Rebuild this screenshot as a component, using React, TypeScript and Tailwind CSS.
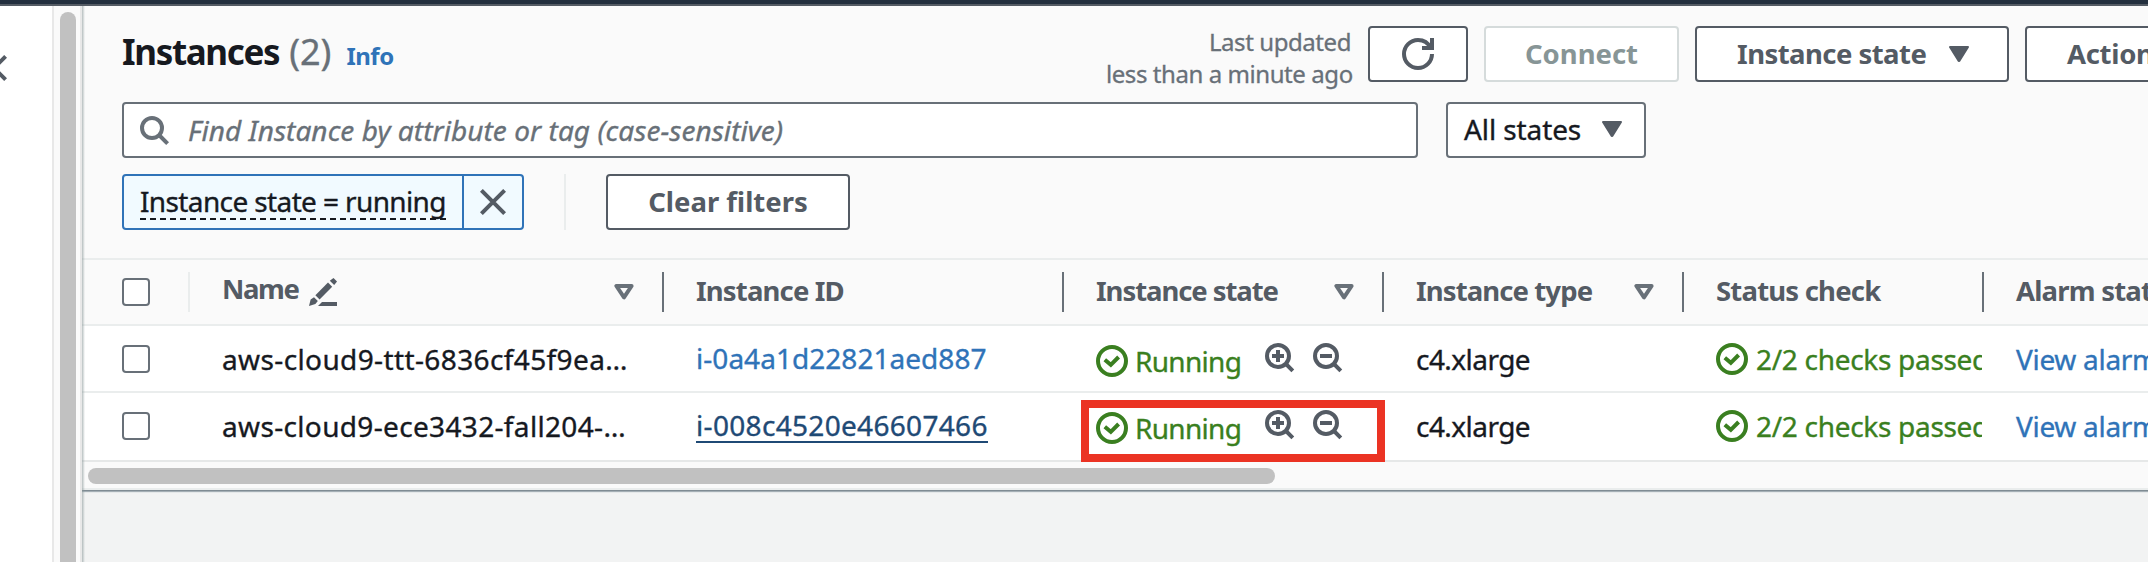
import type { ReactNode } from "react";

type Instance = { name: string; nameClass: string; id: string; idClass: string; selected?: boolean };

const instances: Instance[] = [
  {
    name: "aws-cloud9-ttt-6836cf45f9ea…",
    nameClass: "tracking-[0.38px]",
    id: "i-0a4a1d22821aed887",
    idClass: "text-[#2f73b8] tracking-[0.04px]",
  },
  {
    name: "aws-cloud9-ece3432-fall204-…",
    nameClass: "tracking-[0.34px]",
    id: "i-008c4520e46607466",
    idClass: "text-[#1f4a75] tracking-[0.32px] border-b-2 border-[#1f4a75]",
    selected: true,
  },
];

function CloseIcon() {
  return (
    <svg width="26" height="26" viewBox="0 0 26 26" fill="none" stroke="#545b64" strokeWidth="4" className="shrink-0">
      <path d="M1.4 1.4 24.6 24.6M24.6 1.4 1.4 24.6" />
    </svg>
  );
}

function SearchIcon() {
  return (
    <svg width="32" height="32" viewBox="0 0 32 32" fill="none" stroke="#687078" strokeWidth="4" className="shrink-0">
      <circle cx="14" cy="14" r="10" />
      <path d="M21 21l8.6 8.6" />
    </svg>
  );
}

function ZoomIcon({ plus }: { plus?: boolean }) {
  return (
    <svg width="32" height="32" viewBox="0 0 32 32" fill="none" stroke="#545b64" strokeWidth="4" className="shrink-0">
      <circle cx="14" cy="14" r="11" />
      <path d="M21.5 21.5l7.3 7.3M8 14h12" />
      {plus && <path d="M14 8v12" />}
    </svg>
  );
}

function RefreshIcon() {
  return (
    <svg width="32" height="32" viewBox="0 0 32 32" fill="none" stroke="#545b64" strokeWidth="4">
      <path d="M30 16a14 14 0 1 1-14-14c5.6 0 10.4 3.2 12.6 8" />
      <path d="M20 10h10V0" />
    </svg>
  );
}

function CheckIcon() {
  return (
    <svg width="32" height="32" viewBox="0 0 32 32" fill="none" stroke="#3a7f20" strokeWidth="4" className="shrink-0">
      <circle cx="16" cy="16" r="14" />
      <path d="M8.8 14.8l6 5 7.8-7.8" />
    </svg>
  );
}

function EditIcon() {
  return (
    <svg width="28" height="28" viewBox="0 0 28 28" fill="#545b64" className="shrink-0">
      <path d="M24.5 0 28 3.6 25.2 7 20.8 2.8Z" />
      <path d="M19 4.6 23.2 8.8 10.6 21.4 6.4 17.2Z" />
      <path d="M5 19.2 8.8 23 6.4 26 0 28 1.6 21.6Z" />
      <path d="M13 24h15v4H9Z" />
    </svg>
  );
}

function CaretFilled() {
  return (
    <svg width="20" height="16" viewBox="0 0 20 16" fill="#545b64" stroke="#545b64" strokeWidth="2" strokeLinejoin="round" className="shrink-0">
      <path d="M1 1h18L10.3 15h-.6Z" />
    </svg>
  );
}

function CaretOutline() {
  return (
    <svg width="20" height="16" viewBox="0 0 20 16" fill="none" stroke="#687078" strokeWidth="4" strokeLinejoin="round" className="shrink-0">
      <path d="M2.4 2h15.2L10 13.4Z" />
    </svg>
  );
}

function Button({ className, children }: { className: string; children: ReactNode }) {
  return (
    <button
      className={`flex h-14 shrink-0 items-center rounded-[4px] border-2 bg-white pb-px text-[27.5px] font-bold whitespace-nowrap ${className}`}
    >
      {children}
    </button>
  );
}

function Checkbox() {
  return <span className="block size-7 rounded-[4px] border-2 border-[#687078] bg-white" />;
}

function HeaderCell({ label, className, width, sortable }: { label: string; className: string; width: string; sortable?: boolean }) {
  return (
    <div className={`flex h-10 shrink-0 items-center border-r-2 border-[#687078] pl-8 ${width}`}>
      <span className={`grow pb-0.5 whitespace-nowrap ${className}`}>{label}</span>
      {sortable && (
        <span className="mr-7">
          <CaretOutline />
        </span>
      )}
    </div>
  );
}

function Row({ item }: { item: Instance }) {
  return (
    <div
      className={
        item.selected
          ? "flex h-[69px] shrink-0 items-center border-b-2 border-[#e6e8e8] bg-white pb-0.5 [-webkit-text-stroke:0.35px]"
          : "flex h-[67px] shrink-0 items-center border-b-2 border-[#eaeded] bg-white [-webkit-text-stroke:0.35px]"
      }
    >
      <div className="w-[108px] shrink-0 pl-10">
        <Checkbox />
      </div>
      <div className={`w-[474px] shrink-0 pl-8 whitespace-nowrap ${item.nameClass}`}>{item.name}</div>
      <div className="flex w-[400px] shrink-0 pl-8 whitespace-nowrap">
        <a className={`h-[35px] leading-[34px] ${item.idClass}`}>{item.id}</a>
      </div>
      <div className="relative flex h-[65px] w-80 shrink-0 items-center pl-8">
        {item.selected && <span className="absolute top-[7px] left-[17px] h-[62px] w-[304px] border-8 border-[#eb3323]" />}
        <span className="flex items-center pt-[5px]">
          <CheckIcon />
          <span className="w-32 pl-[7px] tracking-[-0.7px] text-[#3a7f20]">Running</span>
        </span>
        <span className="flex gap-4 pb-px pl-2">
          <ZoomIcon plus />
          <ZoomIcon />
        </span>
      </div>
      <div className="w-[300px] shrink-0 pl-8 tracking-[-0.55px]">c4.xlarge</div>
      <div className="flex w-[298px] shrink-0 items-center overflow-hidden pl-8 whitespace-nowrap text-[#3a7f20]">
        <CheckIcon />
        <span className="pl-2 tracking-[-0.3px]">2/2 checks passed</span>
      </div>
      <div className="shrink-0 pl-[34px] tracking-[-0.3px] whitespace-nowrap text-[#2f73b8]">View alarms</div>
    </div>
  );
}

export default function App() {
  return (
    <div className="flex h-[562px] w-full flex-col overflow-hidden bg-[#f2f3f3] font-['Noto_Sans',sans-serif] text-[28px] leading-9 text-[#16191f]">
      <div className="h-1.5 shrink-0 border-b-2 border-[#545b64] bg-[#232f3e]" />
      <div className="flex min-h-0 grow">
        <div className="flex w-[52px] shrink-0 bg-white pt-[49px]">
          <span className="-ml-[19px]">
            <CloseIcon />
          </span>
        </div>
        <div className="flex w-[30px] shrink-0 border-x-2 border-[#e8e8e8] bg-[#fafafa] pt-1.5 pl-1.5">
          <div className="w-4 rounded-t-full bg-[#c1c1c1]" />
        </div>
        <div className="relative flex min-w-0 grow flex-col overflow-hidden">
          <div className="absolute inset-y-0 left-0 z-10 w-[3px] bg-linear-to-r from-[#879596]/60 to-[#879596]/0" />
          <div className="flex h-[252px] shrink-0 flex-col bg-[#fafafa] pt-5 pl-10">
            <div className="flex h-14 shrink-0">
              <div className="flex w-[984px] shrink-0 items-baseline pt-0.5 whitespace-nowrap">
                <h1 className="text-[35px] leading-[48px] font-bold tracking-[-1.35px]">Instances</h1>
                <span className="pl-2.5 text-[36px] leading-[48px] text-[#687078] [-webkit-text-stroke:0.35px]">(2)</span>
                <a className="pl-[15px] text-[24px] font-bold tracking-[-0.5px] text-[#2f73b8]">Info</a>
              </div>
              <p className="w-[245px] shrink-0 text-right text-[24px] leading-8 tracking-[-0.43px] whitespace-nowrap text-[#687078] [-webkit-text-stroke:0.3px]">
                Last updated
                <br />
                less than a minute ago
              </p>
              <div className="ml-[17px] flex gap-4">
                <Button className="w-[100px] justify-center border-[#545b64]">
                  <RefreshIcon />
                </Button>
                <Button className="w-[195px] justify-center border-[#d5dbdb] text-[#879596]">Connect</Button>
                <Button className="w-[314px] justify-between border-[#545b64] pr-[38px] pl-10 tracking-[-0.55px] text-[#545b64]">
                  Instance state
                  <CaretFilled />
                </Button>
                <Button className="w-[220px] border-[#545b64] pl-10 tracking-[-0.3px] text-[#545b64]">Actions</Button>
              </div>
            </div>
            <div className="mt-5 flex h-14 shrink-0 [-webkit-text-stroke:0.35px]">
              <div className="flex w-[1296px] shrink-0 items-center rounded-[4px] border-2 border-[#687078] bg-white pl-3.5 text-[#687078]">
                <SearchIcon />
                <span className="pl-[18px] tracking-[0.05px] italic">Find Instance by attribute or tag (case-sensitive)</span>
              </div>
              <div className="ml-7 flex w-[200px] shrink-0 items-center justify-between rounded-[4px] border-2 border-[#687078] bg-white pr-[22px] pb-0.5 pl-4 tracking-[-0.1px]">
                All states
                <CaretFilled />
              </div>
            </div>
            <div className="mt-4 flex h-14 shrink-0">
              <div className="flex w-[402px] rounded-[4px] border-2 border-[#2f73b8] bg-[#f1faff]">
                <div className="relative flex w-[340px] items-center border-r-2 border-[#2f73b8] pl-4">
                  <svg width="306" height="2" viewBox="0 0 306 2" className="absolute top-[42px] left-4">
                    <path d="M0 1h306" stroke="#16191f" strokeWidth="2" strokeDasharray="6 4" />
                  </svg>
                  <span className="pb-0.5 tracking-[-0.62px] whitespace-nowrap [-webkit-text-stroke:0.35px]">Instance state = running</span>
                </div>
                <div className="flex grow items-center justify-center">
                  <CloseIcon />
                </div>
              </div>
              <div className="ml-10 w-0.5 bg-[#eaeded]" />
              <Button className="ml-10 w-[244px] justify-center border-[#545b64] text-[#545b64]">Clear filters</Button>
            </div>
          </div>

          <div className="flex h-[68px] shrink-0 items-center border-y-2 border-[#eaeded] bg-[#fafafa] text-[27.5px] font-bold text-[#545b64]">
            <div className="flex h-10 w-[108px] shrink-0 items-center border-r-2 border-[#eaeded] pl-10">
              <Checkbox />
            </div>
            <div className="flex h-10 w-[474px] shrink-0 items-center border-r-2 border-[#687078] pl-8">
              <span className="w-[87px] pb-1.5 tracking-[-1.4px]">Name</span>
              <span className="grow">
                <EditIcon />
              </span>
              <span className="mr-7">
                <CaretOutline />
              </span>
            </div>
            <HeaderCell label="Instance ID" className="tracking-[-0.85px]" width="w-[400px]" />
            <HeaderCell label="Instance state" className="tracking-[-1.08px]" width="w-80" sortable />
            <HeaderCell label="Instance type" className="tracking-[-0.9px]" width="w-[300px]" sortable />
            <HeaderCell label="Status check" className="tracking-[-0.8px]" width="w-[300px]" />
            <span className="pb-0.5 pl-8 tracking-[-0.8px] whitespace-nowrap">Alarm status</span>
          </div>

          {instances.map((item) => (
            <Row key={item.id} item={item} />
          ))}

          <div className="flex h-7 shrink-0 border-b-2 border-[#eaeded] bg-[#fafafa] pt-1.5 pl-1.5 shadow-[0_1px_0_0_#7f8b93,0_2px_1px_0_#a5afb5]">
            <div className="h-4 w-[1187px] rounded-full bg-[#c1c1c1]" />
          </div>
        </div>
      </div>
    </div>
  );
}
